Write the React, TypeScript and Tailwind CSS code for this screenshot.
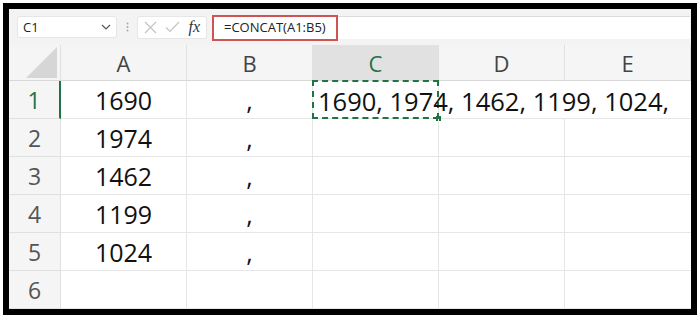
import React from 'react';

const COLS = ['A', 'B', 'C', 'D', 'E'];
const DATA: [string, string][] = [
  ['1690', ','],
  ['1974', ','],
  ['1462', ','],
  ['1199', ','],
  ['1024', ','],
  ['', ''],
];

const cellFont = { fontFamily: '"Open Sans", "Liberation Sans", sans-serif' };

const Toolbar: React.FC = () => (
  <div className="flex items-center h-[36px] bg-[#f3f3f3] pl-[8px] pr-[1px]" style={cellFont}>
    <div className="flex items-center justify-between w-[100px] h-[22px] bg-white rounded-[3px] border border-[#e6e6e6] pl-[5px] pr-[5px]">
      <span className="text-[13px] text-[#222] leading-none">C1</span>
      <svg width="10" height="6" viewBox="0 0 10 6">
        <path d="M1 1 L5 5 L9 1" stroke="#555" strokeWidth="1.2" fill="none" />
      </svg>
    </div>
    <div className="w-[20px] flex justify-center">
      <svg width="3" height="10" viewBox="0 0 3 10">
        <circle cx="1.5" cy="1.5" r="1" fill="#aaa" />
        <circle cx="1.5" cy="5" r="1" fill="#aaa" />
        <circle cx="1.5" cy="8.5" r="1" fill="#aaa" />
      </svg>
    </div>
    <div className="flex items-center justify-between w-[70px] h-[23px] bg-white rounded-[3px] border border-[#e6e6e6] px-[6px]">
      <svg width="13" height="13" viewBox="0 0 13 13">
        <path d="M1 1 L12 12 M12 1 L1 12" stroke="#c4c4c4" strokeWidth="1.2" />
      </svg>
      <svg width="15" height="12" viewBox="0 0 15 12">
        <path d="M1 6.5 L5 10.5 L14 1" stroke="#c4c4c4" strokeWidth="1.2" fill="none" />
      </svg>
      <span
        className="text-[16px] italic text-[#333] leading-none"
        style={{ fontFamily: '"Liberation Serif", serif' }}
      >
        fx
      </span>
    </div>
    <div className="flex-1 ml-[5px] h-[23px] bg-white border-t border-[#dcdcdc] flex items-stretch">
      <div className="w-[126px] border-2 border-[#d05353] flex items-center pl-[10px] -mt-[2px] h-[26px]">
        <span className="text-[13px] text-[#222] leading-none">=CONCAT(A1:B5)</span>
      </div>
    </div>
  </div>
);

const HeaderRow: React.FC = () => (
  <div className="flex h-[36px] bg-[#f5f5f5] border-b border-[#d8d8d8]">
    <div className="w-[52px] relative border-r border-[#e0e0e0]">
      <svg className="absolute right-[3px] bottom-[2px]" width="31" height="31" viewBox="0 0 31 31">
        <path d="M31 0 L31 31 L0 31 Z" fill="#d6d6d6" />
      </svg>
    </div>
    {COLS.map((c) => (
      <div
        key={c}
        className={`w-[126px] flex items-center justify-center border-r border-[#e0e0e0] text-[22px] pt-[1px] ${
          c === 'C' ? 'bg-[#e1e1e1] text-[#217346]' : 'text-[#444]'
        }`}
        style={cellFont}
      >
        {c}
      </div>
    ))}
  </div>
);

const App: React.FC = () => {
  return (
    <div className="w-[700px] h-[321px] bg-white pt-[3px] pl-[3px]">
      <div className="w-[694px] h-[312px] border-[6px] border-black bg-white overflow-hidden">
        <Toolbar />
        <HeaderRow />
        {DATA.map(([a, b], i) => {
          const row = i + 1;
          const first = row === 1;
          return (
            <div key={row} className="flex h-[38px]">
              <div
                className={`w-[52px] bg-[#f5f5f5] flex items-center justify-center text-[23px] pt-[2px] border-b border-[#e0e0e0] ${
                  first ? 'text-[#217346] border-r-2 border-r-[#217346]' : 'text-[#555] border-r border-r-[#e0e0e0]'
                }`}
                style={cellFont}
              >
                {row}
              </div>
              <div
                className="w-[126px] flex items-center justify-center text-[25px] pt-[3px] text-[#111] border-r border-b border-[#e6e6e6]"
                style={cellFont}
              >
                {a}
              </div>
              <div
                className="w-[126px] flex items-center justify-center text-[25px] pt-[3px] text-[#111] border-r border-b border-[#e6e6e6]"
                style={cellFont}
              >
                {b}
              </div>
              <div className="w-[126px] relative border-r border-b border-[#e6e6e6]">
                {first && (
                  <>
                    <div className="absolute -left-px -top-px w-[127px] h-[39px] border-2 border-dashed border-[#217346]" />
                    <span
                      className="absolute left-[5px] top-0 h-[37px] pt-[3px] flex items-center whitespace-nowrap text-[25.5px] text-[#111] z-10"
                      style={cellFont}
                    >
                      1690, 1974, 1462, 1199, 1024,
                    </span>
                    <div className="absolute -right-[3px] -bottom-[3px] w-[5px] h-[5px] bg-[#217346]" />
                  </>
                )}
              </div>
              <div className={`w-[126px] border-b border-[#e6e6e6] ${first ? '' : 'border-r'}`} />
              <div className="w-[126px] border-b border-[#e6e6e6]" />
            </div>
          );
        })}
      </div>
    </div>
  );
};

export default App;
